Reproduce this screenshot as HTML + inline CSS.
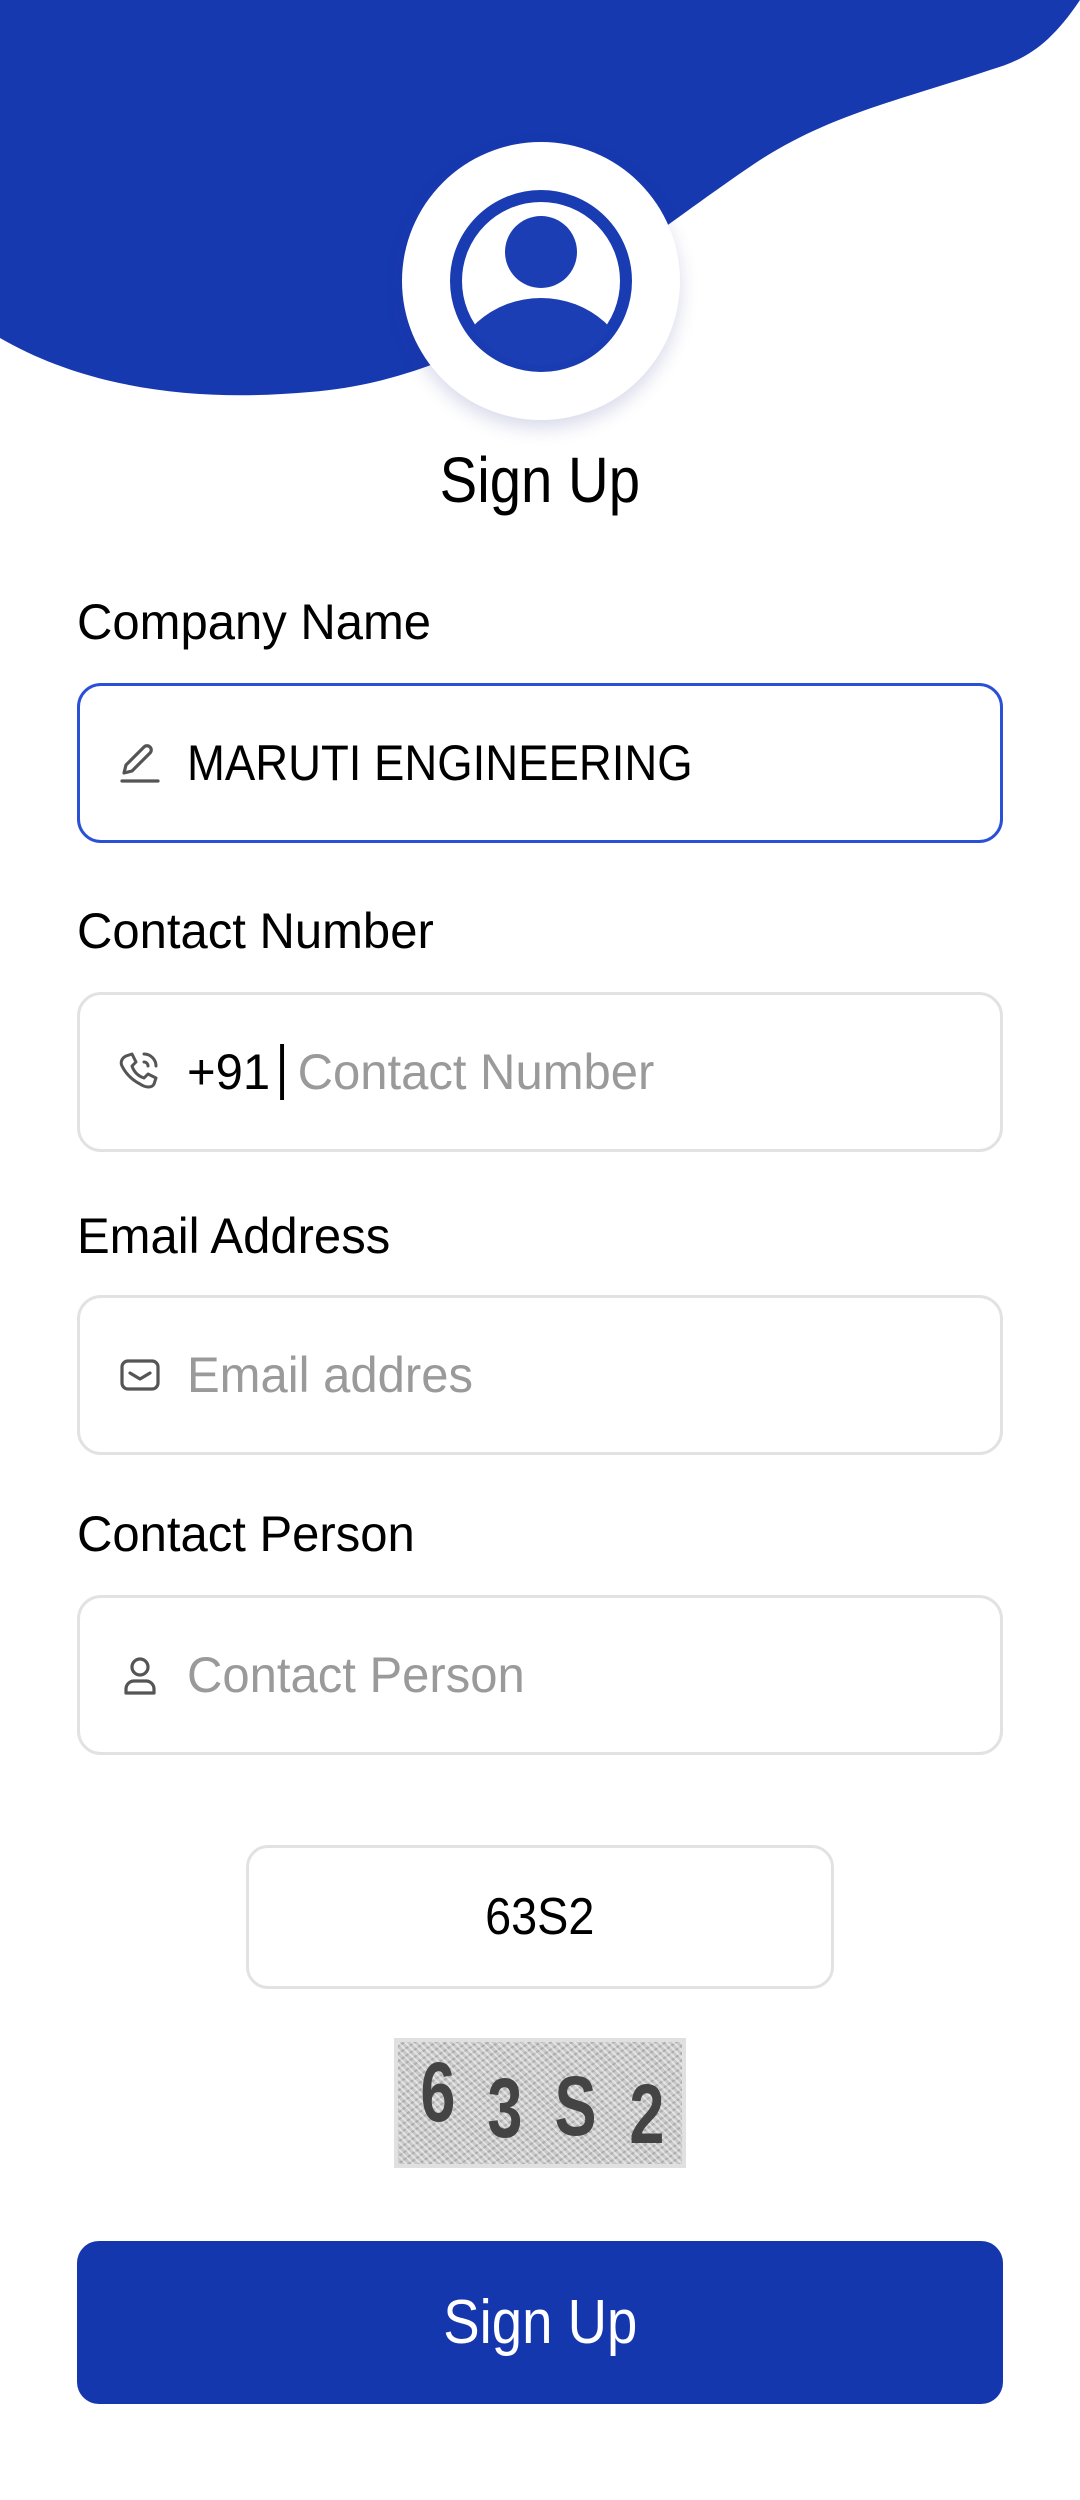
<!DOCTYPE html>
<html><head><meta charset="utf-8"><style>
*{margin:0;padding:0;box-sizing:border-box}
body{width:1080px;height:2500px;background:#fff;position:relative;overflow:hidden;font-family:"Liberation Sans",sans-serif;color:#000}
.abs{position:absolute}
.lbl{position:absolute;left:77px;font-size:50px;transform:scaleX(.98);transform-origin:left center;white-space:nowrap;line-height:60px}
.inp{position:absolute;left:77px;width:926px;height:160px;border:3px solid #e2e2e2;border-radius:24px}
.inp.f{border-color:#2a50d8}
.ico{position:absolute;left:36px;top:50%;transform:translateY(-50%)}
.txt{position:absolute;left:107px;top:50%;transform:translateY(-50%) scaleX(.98);transform-origin:left center;font-size:50px;white-space:nowrap}
.ph{color:#9a9a9a}
</style></head><body>
<svg class="abs" style="left:0;top:0" width="1080" height="420" viewBox="0 0 1080 420">
<path d="M0,0 H1080 C1050,45 1025,60 990,70 C900,100 830,115 760,160 C700,200 650,240 560,300 C480,350 400,385 310,392 C200,402 90,390 0,338 Z" fill="#1739b0"/>
</svg>
<div class="abs" style="left:402px;top:142px;width:278px;height:278px;border-radius:50%;background:#fff;box-shadow:0 8px 18px rgba(40,50,140,.18)"></div>
<svg class="abs" style="left:450px;top:190px" width="182" height="182" viewBox="0 0 182 182">
<defs><clipPath id="c"><circle cx="91" cy="91" r="84"/></clipPath></defs>
<circle cx="91" cy="91" r="85" fill="none" stroke="#1a3cb3" stroke-width="12"/>
<circle cx="91" cy="62" r="36" fill="#1c3eb5"/>
<ellipse cx="91" cy="190" rx="90" ry="82" fill="#1c3eb5" clip-path="url(#c)"/>
</svg>
<div class="abs" style="left:0;width:1080px;top:445px;text-align:center;font-size:64px;line-height:70px"><span style="display:inline-block;transform:scaleX(.88)">Sign Up</span></div>

<div class="lbl" style="top:592px">Company Name</div>
<div class="inp f" style="top:683px">
<svg class="ico" width="48" height="48" viewBox="0 0 24 24" fill="none" stroke="#555" stroke-width="1.6" stroke-linecap="round" stroke-linejoin="round"><path d="M4 17l1-4L14 4a2 2 0 0 1 3 3L8 16l-4 1z"/><path d="M3 21h18"/></svg>
<div class="txt" style="transform:translateY(-50%) scaleX(.91)">MARUTI ENGINEERING</div></div>

<div class="lbl" style="top:901px">Contact Number</div>
<div class="inp" style="top:992px">
<svg class="ico" width="48" height="48" viewBox="0 0 24 24" fill="none" stroke="#555" stroke-width="1.5" stroke-linecap="round" stroke-linejoin="round"><path d="M5 4l3-1 2 4-2 2c1 3 3 5 6 6l2-2 4 2-1 3c-1 2-4 2-7 0C8 16 5 13 3 9 2 7 3 5 5 4z"/><path d="M14 3a6 6 0 0 1 6 6"/><path d="M14 7a2 2 0 0 1 2 2"/></svg>
<div class="txt">+91<span style="border-left:4px solid #000;margin-left:10px;padding-left:14px" class="ph">Contact Number</span></div></div>

<div class="lbl" style="top:1206px">Email Address</div>
<div class="inp" style="top:1295px">
<svg class="ico" width="48" height="48" viewBox="0 0 24 24" fill="none" stroke="#555" stroke-width="1.6" stroke-linecap="round" stroke-linejoin="round"><rect x="3" y="5" width="18" height="14" rx="3"/><path d="M7 11l5 3 5-3"/></svg>
<div class="txt ph">Email addres</div></div>

<div class="lbl" style="top:1504px">Contact Person</div>
<div class="inp" style="top:1595px">
<svg class="ico" width="48" height="48" viewBox="0 0 24 24" fill="none" stroke="#555" stroke-width="1.6" stroke-linecap="round" stroke-linejoin="round"><circle cx="12" cy="8" r="4"/><path d="M5 21v-2a4 4 0 0 1 4-4h6a4 4 0 0 1 4 4v2z"/></svg>
<div class="txt ph">Contact Person</div></div>

<div class="abs" style="left:246px;top:1845px;width:588px;height:144px;border:3px solid #e2e2e2;border-radius:22px;text-align:center;line-height:138px;font-size:52px"><span style="display:inline-block;transform:scaleX(.9)">63S2</span></div>

<div class="abs" style="left:394px;top:2038px;width:292px;height:130px;border:4px solid #e0e0e0;background:#c9c9c9;background-image:repeating-linear-gradient(45deg,rgba(255,255,255,.5) 0 2px,transparent 2px 5px),repeating-linear-gradient(-35deg,rgba(120,120,120,.35) 0 2px,transparent 2px 6px);font-family:'Liberation Sans',sans-serif;font-weight:bold;font-size:84px;color:#444;line-height:120px;letter-spacing:20px;padding-left:14px;white-space:nowrap"><span style="position:relative;top:-10px;display:inline-block;transform:scaleX(.75)">6</span><span style="position:relative;top:6px;display:inline-block;transform:scaleX(.75)">3</span><span style="position:relative;top:4px;display:inline-block;transform:scaleX(.75)">S</span><span style="position:relative;top:12px;display:inline-block;transform:scaleX(.75)">2</span></div>

<div class="abs" style="left:77px;top:2241px;width:926px;height:163px;background:#1537ae;border-radius:22px;color:#fff;text-align:center;line-height:163px;font-size:62px"><span style="display:inline-block;transform:scaleX(.88)">Sign Up</span></div>
</body></html>
